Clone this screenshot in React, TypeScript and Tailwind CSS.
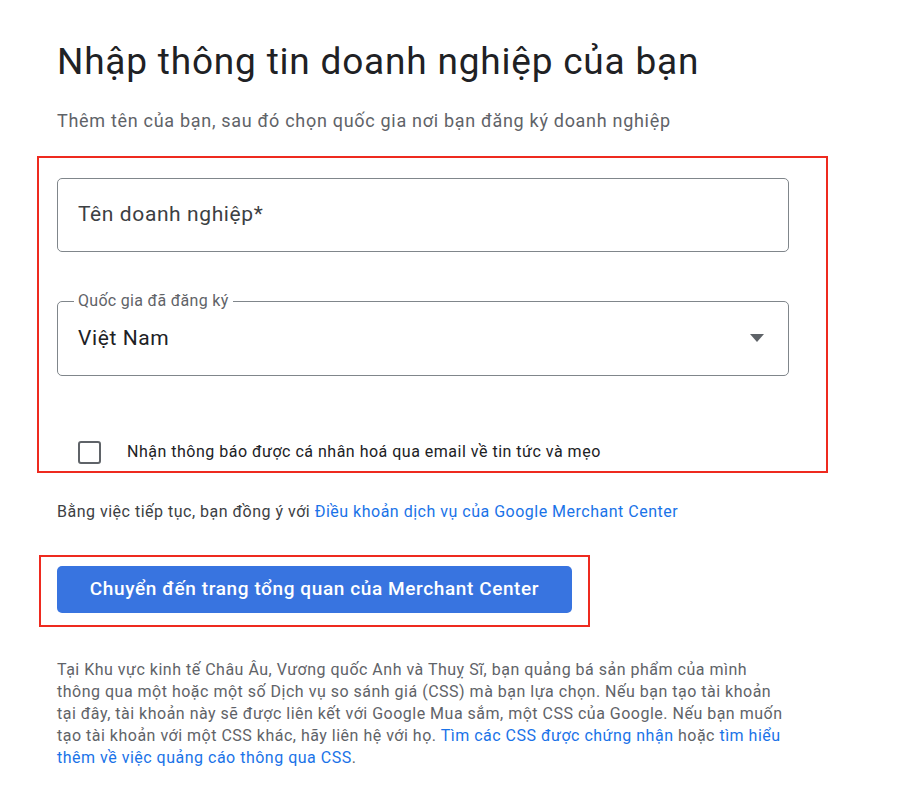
import { useState } from "react";

export default function App() {
  const [checked, setChecked] = useState(false);

  return (
    <div
      className="min-h-screen w-[900px] bg-white pl-[57px] pt-[40px] text-[#202124]"
      style={{ fontFamily: "Roboto, 'Noto Sans', sans-serif" }}
    >
      {/* Heading */}
      <h1 className="text-[37px] leading-[44px] font-normal tracking-[0.8px]">
        Nhập thông tin doanh nghiệp của bạn
      </h1>
      <p className="mt-[25px] text-[18px] leading-[24px] tracking-[0.7px] text-[#5f6368]">
        Thêm tên của bạn, sau đó chọn quốc gia nơi bạn đăng ký doanh nghiệp
      </p>

      {/* Highlighted form area */}
      <div className="-ml-[20px] mt-[23px] w-[791px] border-2 border-[#ee2a1f] pb-[4px] pl-[18px] pt-[20px]">
        <div className="flex h-[74px] w-[732px] items-center rounded-[5px] border border-[#80868b] px-[20px]">
          <span className="text-[21px] tracking-[0.6px] text-[#3c4043]">Tên doanh nghiệp*</span>
        </div>

        <div className="relative mt-[49px] flex h-[75px] w-[732px] items-center justify-between rounded-[5px] border border-[#80868b] pl-[20px] pr-[24px]">
          <span className="absolute -top-[11px] left-[16px] bg-white px-[4px] text-[16px] leading-[20px] tracking-[0.3px] text-[#5f6368]">
            Quốc gia đã đăng ký
          </span>
          <span className="text-[21px] tracking-[0.6px] text-[#202124]">Việt Nam</span>
          <svg width="14" height="8" viewBox="0 0 14 8" className="-mt-[2px]">
            <path d="M0 0h14L7 8z" fill="#5f6368" />
          </svg>
        </div>

        <label className="mt-[61px] flex h-[30px] cursor-pointer items-center">
          <button
            type="button"
            onClick={() => setChecked(!checked)}
            className="ml-[21px] h-[23px] w-[23px] rounded-[3px] border-2 border-[#5f6368] bg-white"
          />
          <span className="ml-[26px] text-[16px] tracking-[0.5px] text-[#202124]">
            Nhận thông báo được cá nhân hoá qua email về tin tức và mẹo
          </span>
        </label>
      </div>

      {/* Terms */}
      <p className="mt-[28px] text-[16px] leading-[22px] tracking-[0.5px] text-[#3c4043]">
        Bằng việc tiếp tục, bạn đồng ý với{" "}
        <a className="text-[#1a73e8]">Điều khoản dịch vụ của Google Merchant Center</a>
      </p>

      {/* CTA */}
      <div className="-ml-[18px] mt-[32px] w-[551px] border-2 border-[#ee2a1f] pb-[12px] pl-[16px] pt-[9px]">
        <button
          type="button"
          className="flex h-[47px] w-[515px] items-center justify-center rounded-[5px] bg-[#3874e0] text-[19px] font-medium tracking-[0.6px] text-white"
        >
          Chuyển đến trang tổng quan của Merchant Center
        </button>
      </div>

      {/* Footnote */}
      <p className="mt-[32px] w-[736px] text-[16px] leading-[22px] tracking-[0.5px] text-[#5f6368]">
        Tại Khu vực kinh tế Châu Âu, Vương quốc Anh và Thuỵ Sĩ, bạn quảng bá sản phẩm của mình
        thông qua một hoặc một số Dịch vụ so sánh giá (CSS) mà bạn lựa chọn. Nếu bạn tạo tài khoản
        tại đây, tài khoản này sẽ được liên kết với Google Mua sắm, một CSS của Google. Nếu bạn muốn
        tạo tài khoản với một CSS khác, hãy liên hệ với họ.{" "}
        <a className="text-[#1a73e8]">Tìm các CSS được chứng nhận</a> hoặc{" "}
        <a className="text-[#1a73e8]">tìm hiểu thêm về việc quảng cáo thông qua CSS</a>.
      </p>
    </div>
  );
}
